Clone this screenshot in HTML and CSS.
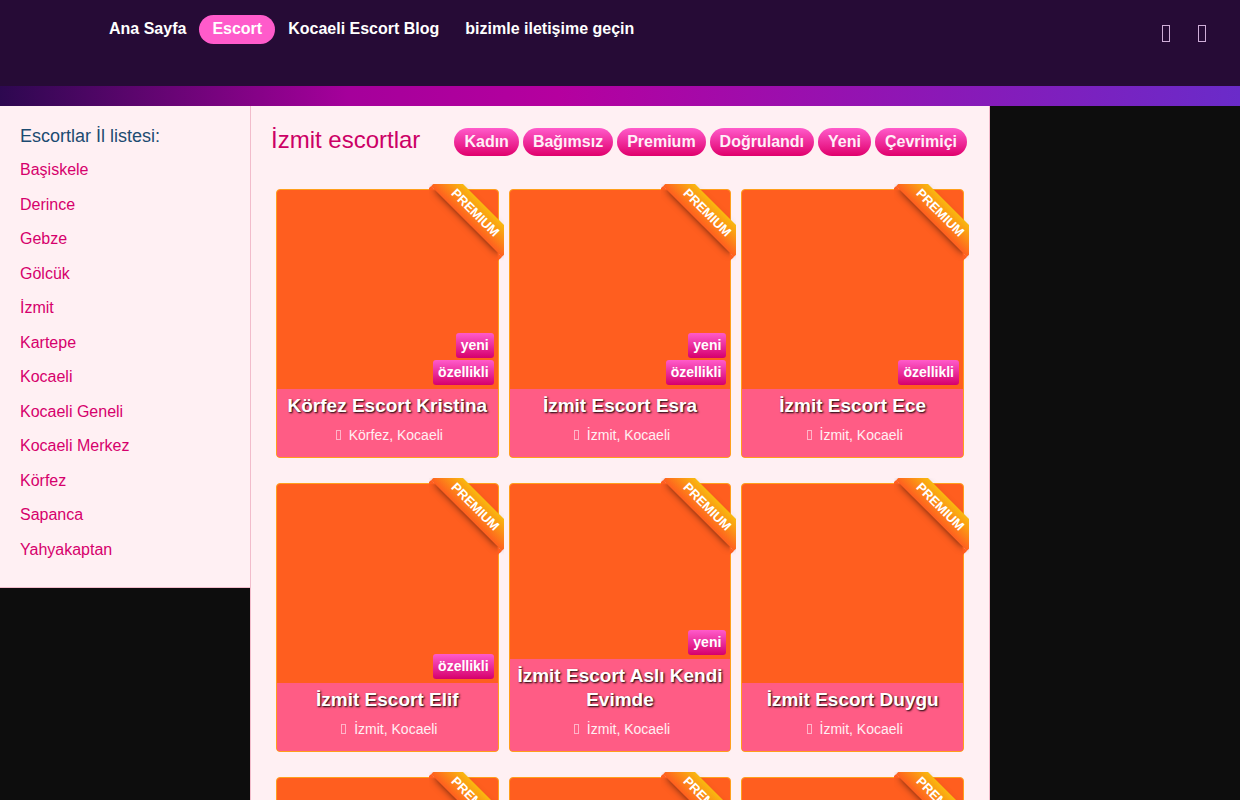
FILE: index.html
```html
<!DOCTYPE html>
<html lang="tr">
<head>
<meta charset="utf-8">
<meta name="viewport" content="width=device-width, initial-scale=1">
<title>İzmit escortlar</title>
<link rel="stylesheet" href="styles.css">
</head>
<body>
<header class="site-header">
  <nav class="main-nav">
    <a href="#">Ana Sayfa</a>
    <a href="#" class="active">Escort</a>
    <a href="#">Kocaeli Escort Blog</a>
    <a href="#">bizimle iletişime geçin</a>
  </nav>
  <div class="header-icons">
    <a href="#" aria-label="Giriş"><svg width="8" height="17" viewBox="0 0 8 17"><rect x=".5" y=".5" width="7" height="16"/></svg></a>
    <a href="#" aria-label="Ara"><svg width="8" height="17" viewBox="0 0 8 17"><rect x=".5" y=".5" width="7" height="16"/></svg></a>
  </div>
</header>
<div class="stripe"></div>
<div class="page">
  <aside class="sidebar">
    <h2 class="sidebar-title">Escortlar İl listesi:</h2>
    <ul class="city-list">
      <li><a href="#">Başiskele</a></li>
      <li><a href="#">Derince</a></li>
      <li><a href="#">Gebze</a></li>
      <li><a href="#">Gölcük</a></li>
      <li><a href="#">İzmit</a></li>
      <li><a href="#">Kartepe</a></li>
      <li><a href="#">Kocaeli</a></li>
      <li><a href="#">Kocaeli Geneli</a></li>
      <li><a href="#">Kocaeli Merkez</a></li>
      <li><a href="#">Körfez</a></li>
      <li><a href="#">Sapanca</a></li>
      <li><a href="#">Yahyakaptan</a></li>
    </ul>
  </aside>
  <main class="content">
    <div class="content-head">
      <h1>İzmit escortlar</h1>
      <div class="filters">
        <a href="#">Kadın</a>
        <a href="#">Bağımsız</a>
        <a href="#">Premium</a>
        <a href="#">Doğrulandı</a>
        <a href="#">Yeni</a>
        <a href="#">Çevrimiçi</a>
      </div>
    </div>
    <div class="cards">
      <article class="card">
        <div class="ribbon"><span>PREMIUM</span></div>
        <div class="photo"><span class="badge">yeni</span><span class="badge">özellikli</span></div>
        <div class="info"><a class="name" href="#">Körfez Escort Kristina</a><p class="place"><svg class="pin" width="5" height="10" viewBox="0 0 5 10"><rect x=".5" y=".5" width="4" height="9"/></svg>Körfez, Kocaeli</p></div>
      </article>
      <article class="card">
        <div class="ribbon"><span>PREMIUM</span></div>
        <div class="photo"><span class="badge">yeni</span><span class="badge">özellikli</span></div>
        <div class="info"><a class="name" href="#">İzmit Escort Esra</a><p class="place"><svg class="pin" width="5" height="10" viewBox="0 0 5 10"><rect x=".5" y=".5" width="4" height="9"/></svg>İzmit, Kocaeli</p></div>
      </article>
      <article class="card">
        <div class="ribbon"><span>PREMIUM</span></div>
        <div class="photo"><span class="badge">özellikli</span></div>
        <div class="info"><a class="name" href="#">İzmit Escort Ece</a><p class="place"><svg class="pin" width="5" height="10" viewBox="0 0 5 10"><rect x=".5" y=".5" width="4" height="9"/></svg>İzmit, Kocaeli</p></div>
      </article>
      <article class="card">
        <div class="ribbon"><span>PREMIUM</span></div>
        <div class="photo"><span class="badge">özellikli</span></div>
        <div class="info"><a class="name" href="#">İzmit Escort Elif</a><p class="place"><svg class="pin" width="5" height="10" viewBox="0 0 5 10"><rect x=".5" y=".5" width="4" height="9"/></svg>İzmit, Kocaeli</p></div>
      </article>
      <article class="card">
        <div class="ribbon"><span>PREMIUM</span></div>
        <div class="photo"><span class="badge">yeni</span></div>
        <div class="info"><a class="name" href="#">İzmit Escort Aslı Kendi Evimde</a><p class="place"><svg class="pin" width="5" height="10" viewBox="0 0 5 10"><rect x=".5" y=".5" width="4" height="9"/></svg>İzmit, Kocaeli</p></div>
      </article>
      <article class="card">
        <div class="ribbon"><span>PREMIUM</span></div>
        <div class="photo"></div>
        <div class="info"><a class="name" href="#">İzmit Escort Duygu</a><p class="place"><svg class="pin" width="5" height="10" viewBox="0 0 5 10"><rect x=".5" y=".5" width="4" height="9"/></svg>İzmit, Kocaeli</p></div>
      </article>
      <article class="card"><div class="ribbon"><span>PREMIUM</span></div><div class="photo"></div></article>
      <article class="card"><div class="ribbon"><span>PREMIUM</span></div><div class="photo"></div></article>
      <article class="card"><div class="ribbon"><span>PREMIUM</span></div><div class="photo"></div></article>
    </div>
  </main>
</div>
</body>
</html>
```
FILE: styles.css
```css
* { box-sizing: border-box; }
html { scrollbar-width: none; }
body {
  margin: 0;
  background: #0d0d0d;
  font-family: "Liberation Sans", Arial, sans-serif;
  font-size: 16px;
}
a { text-decoration: none; }

.site-header {
  display: flex;
  justify-content: space-between;
  align-items: flex-start;
  min-height: 86px;
  padding: 15px 34px 0 96px;
  background: #260b36;
}
.main-nav { display: flex; }
.main-nav a {
  padding: 4px 13px 5px;
  border-radius: 15px;
  color: #fff;
  font-weight: bold;
  line-height: 20px;
}
.main-nav .active { background: #ff5bcb; }
.header-icons {
  display: flex;
  gap: 28px;
  padding-top: 10px;
}
.header-icons svg { display: block; }
.header-icons rect {
  fill: none;
  stroke: #cfaed8;
}
.stripe {
  height: 20px;
  background: linear-gradient(90deg, #2d0850 0%, #a5009b 28%, #b5009f 45%, #6a2bc9 100%);
}

.page {
  display: grid;
  grid-template-columns: 250px 1fr;
  align-items: start;
  max-width: 990px;
}
.sidebar {
  padding: 20px;
  background: #fff0f3;
  border-bottom: 1px solid #f2bccb;
}
.sidebar-title {
  margin: 0 0 7px;
  color: #1c4b71;
  font-size: 18px;
  font-weight: normal;
  line-height: 20px;
}
.city-list {
  display: grid;
  grid-auto-rows: 1fr;
  align-items: center;
  height: 414px;
  margin: 0;
  padding: 0;
  list-style: none;
}
.city-list a { color: #d6006c; }

.content {
  padding: 20px 25px 25px;
  background: #fff0f3;
  border: solid #f2bccb;
  border-width: 0 1px;
}
.content-head {
  display: flex;
  justify-content: space-between;
  align-items: flex-start;
  margin: 0 -3px 33px -5px;
}
.content-head h1 {
  margin: 0;
  color: #cc0066;
  font-size: 24px;
  font-weight: normal;
  line-height: 28px;
}
.filters {
  display: flex;
  gap: 4px;
  padding-top: 2px;
}
.filters a {
  padding: 0 10px;
  border-radius: 14px;
  background: linear-gradient(#ff5bcb, #e0006c);
  color: #fff0f8;
  font-weight: bold;
  line-height: 28px;
}

.cards {
  display: grid;
  grid-template-columns: repeat(3, 1fr);
  gap: 25px 10px;
}
.card {
  position: relative;
  display: flex;
  flex-direction: column;
  min-height: 269px;
  border: 1px solid #ff9f1c;
  border-radius: 4px;
  background: #ff5e1f;
}
.photo {
  display: flex;
  flex: 1;
  flex-direction: column;
  justify-content: flex-end;
  align-items: flex-end;
  gap: 2px;
  padding: 4px;
}
.badge {
  padding: 0 5px;
  border-radius: 3px;
  background: linear-gradient(#ff5bcb, #d6006c);
  color: #fff;
  font-size: 14px;
  font-weight: bold;
  line-height: 25px;
}
.info {
  padding: 5px 4px 12px;
  border-radius: 0 0 3px 3px;
  background: #ff5c85;
  text-align: center;
}
.name {
  display: block;
  color: #fff;
  font-size: 19px;
  font-weight: bold;
  line-height: 24px;
  text-shadow: 1px 1px 2px #000;
}
.place {
  margin: 7px 0 0;
  color: #fff0f3;
  font-size: 14px;
  line-height: 20px;
}
.pin {
  margin: 0 8px 0 4px;
}
.pin rect {
  fill: none;
  stroke: #ffb4c8;
}

.ribbon {
  position: absolute;
  top: -6px;
  right: -6px;
  width: 75px;
  height: 77px;
  overflow: hidden;
}
.ribbon span {
  position: absolute;
  top: 17px;
  right: -21px;
  width: 100px;
  background: linear-gradient(#f9b90f, #ff5e1f);
  box-shadow: 0 3px 10px -5px #000;
  color: #fff;
  font-size: 13px;
  font-weight: bold;
  line-height: 24px;
  text-align: center;
  transform: rotate(45deg);
}
.ribbon span::before,
.ribbon span::after {
  content: "";
  position: absolute;
  top: 100%;
  border: 3px solid transparent;
  border-top-color: #ff5e1f;
}
.ribbon span::before {
  left: 0;
  border-left-color: #ff5e1f;
}
.ribbon span::after {
  right: 0;
  border-right-color: #ff5e1f;
}
```
